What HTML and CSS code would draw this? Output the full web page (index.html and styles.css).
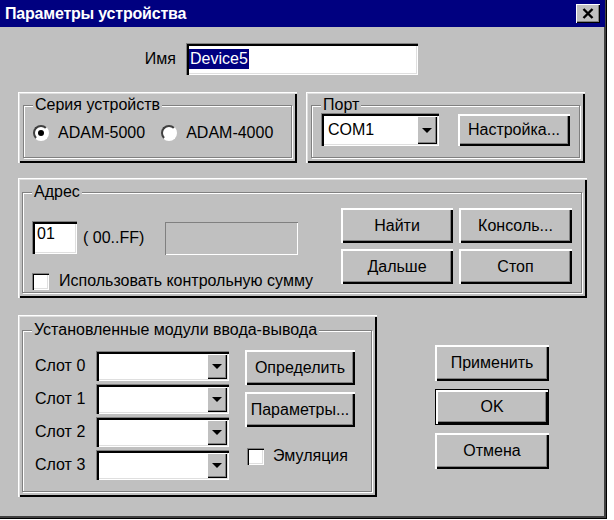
FILE: index.html
```html
<!DOCTYPE html>
<html lang="ru">
<head>
    <meta charset="UTF-8">
    <title>Параметры устройства</title>
    <link rel="stylesheet" href="styles.css">
</head>
<body>
<div class="window">
    <div class="titlebar">
        <span class="title">Параметры устройства</span>
        <span class="close-btn">
            <svg width="12" height="11" viewBox="0 0 12 11"><path d="M1.5 1 L10.5 10 M10.5 1 L1.5 10" stroke="#000" stroke-width="2.4"/></svg>
        </span>
    </div>

    <div class="content">
        <div class="name-row">
            <label class="name-label">Имя</label>
            <div class="field name-field"><span class="selected">Device5</span></div>
        </div>

        <div class="panel-row">
            <div class="panel series-panel">
                <fieldset class="group series-group">
                    <legend>Серия устройств</legend>
                    <div class="radios">
                        <span class="radio checked"></span><span class="radio-text">ADAM-5000</span>
                        <span class="radio"></span><span class="radio-text">ADAM-4000</span>
                    </div>
                </fieldset>
            </div>
            <div class="panel port-panel">
                <fieldset class="group port-group">
                    <legend>Порт</legend>
                    <div class="port-row">
                        <div class="field combo port-combo">
                            <span class="combo-value">COM1</span>
                            <span class="combo-btn"><span class="arrow"></span></span>
                        </div>
                        <button class="btn setup-btn">Настройка...</button>
                    </div>
                </fieldset>
            </div>
        </div>

        <div class="panel address-panel">
            <fieldset class="group address-group">
                <legend>Адрес</legend>
                <div class="address-left">
                    <div class="address-row">
                        <div class="field addr-field">01</div>
                        <span class="hint">( 00..FF)</span>
                        <div class="field disabled-field"></div>
                    </div>
                    <div class="check-row">
                        <span class="check"></span>
                        <span class="check-text">Использовать контрольную сумму</span>
                    </div>
                </div>
                <div class="address-buttons">
                    <button class="btn">Найти</button>
                    <button class="btn">Консоль...</button>
                    <button class="btn">Дальше</button>
                    <button class="btn">Стоп</button>
                </div>
            </fieldset>
        </div>

        <div class="bottom-row">
            <div class="panel modules-panel">
                <fieldset class="group modules-group">
                    <legend>Установленные модули ввода-вывода</legend>
                    <div class="slots">
                        <span class="slot-label">Слот 0</span>
                        <div class="field combo slot-combo"><span class="combo-value"></span><span class="combo-btn"><span class="arrow"></span></span></div>
                        <span class="slot-label">Слот 1</span>
                        <div class="field combo slot-combo"><span class="combo-value"></span><span class="combo-btn"><span class="arrow"></span></span></div>
                        <span class="slot-label">Слот 2</span>
                        <div class="field combo slot-combo"><span class="combo-value"></span><span class="combo-btn"><span class="arrow"></span></span></div>
                        <span class="slot-label">Слот 3</span>
                        <div class="field combo slot-combo"><span class="combo-value"></span><span class="combo-btn"><span class="arrow"></span></span></div>
                    </div>
                    <div class="module-actions">
                        <button class="btn">Определить</button>
                        <button class="btn">Параметры...</button>
                        <div class="check-row emul-row">
                            <span class="check"></span>
                            <span class="check-text">Эмуляция</span>
                        </div>
                    </div>
                </fieldset>
            </div>

            <div class="actions">
                <button class="btn">Применить</button>
                <button class="btn default-btn">OK</button>
                <button class="btn">Отмена</button>
            </div>
        </div>
    </div>
</div>
</body>
</html>
```

FILE: styles.css
```css
body {
    margin: 0;
    background: #fff;
    font-family: "Liberation Sans", Arial, sans-serif;
    font-size: 16px;
    color: #000;
}

.window {
    width: 607px;
    height: 519px;
    background: #c0c0c0;
    box-sizing: border-box;
    box-shadow: inset -1px -1px #000, inset -3px -3px #404040;
}

/* title bar */
.titlebar {
    height: 27px;
    margin-right: 2px;
    background: #000080;
    display: flex;
    align-items: center;
    justify-content: space-between;
    padding: 0 5px 0 5px;
}
.title {
    color: #fff;
    font-weight: bold;
    font-size: 16px;
    letter-spacing: -0.2px;
}
.close-btn {
    width: 24px;
    height: 19px;
    background: #c0c0c0;
    display: flex;
    align-items: center;
    justify-content: center;
    box-shadow: inset 1px 1px #fff, inset -1px -1px #000, inset -2px -2px #808080;
}

.content {
    padding-left: 18px;
}

/* common widgets */
.field {
    background: #fff;
    box-sizing: border-box;
    box-shadow: inset 1px 1px #808080, inset 3px 3px #000, inset -1px -1px #fff, inset -2px -2px #dfdfdf;
}
.btn {
    background: #c0c0c0;
    border: 0;
    padding: 0;
    font: inherit;
    color: #000;
    box-sizing: border-box;
    box-shadow: inset 2px 2px #fff, inset -2px -2px #000, inset -3px -3px #808080;
}
.default-btn {
    box-shadow: inset 0 0 0 1px #000, inset 3px 3px #fff, inset -3px -3px #000, inset -4px -4px #808080;
}
.panel {
    box-sizing: border-box;
    display: flex;
    flex-direction: column;
    box-shadow: inset 1px 1px #fff, inset 2px 2px #dfdfdf, inset -2px -2px #000;
}
.group {
    flex: 1;
    margin: 0;
    min-width: 0;
    border: 1px solid #808080;
    box-shadow: inset 1px 1px #fff, 1px 1px #fff;
    padding: 0 9px;
}
.group legend {
    background: #c0c0c0;
    padding: 0 2px;
    line-height: 16px;
}
.combo {
    display: flex;
    align-items: stretch;
    padding: 3px 2px 2px 3px;
}
.combo-value {
    flex: 1;
    display: flex;
    align-items: center;
    padding-left: 4px;
}
.combo-btn {
    width: 20px;
    background: #c0c0c0;
    display: flex;
    align-items: center;
    justify-content: center;
    box-shadow: inset 1px 1px #fff, inset -1px -1px #000, inset -2px -2px #808080;
}
.arrow {
    width: 0;
    height: 0;
    border-left: 5px solid transparent;
    border-right: 5px solid transparent;
    border-top: 5px solid #000;
}
.check {
    flex-shrink: 0;
    width: 17px;
    height: 17px;
    background: #fff;
    box-sizing: border-box;
    box-shadow: inset 1px 1px #808080, inset 2px 2px #000, inset -1px -1px #fff, inset -2px -2px #dfdfdf;
}
.check-row {
    display: flex;
    align-items: center;
    gap: 10px;
    white-space: nowrap;
}

/* name */
.name-row {
    display: flex;
    align-items: center;
    margin-top: 16px;
    padding-left: 112px;
}
.name-label {
    width: 46px;
    text-align: right;
    margin-right: 10px;
}
.name-field {
    width: 232px;
    height: 32px;
    display: flex;
    align-items: center;
    padding-left: 3px;
}
.selected {
    background: #000080;
    color: #fff;
    padding: 1px 1px;
}

/* series + port */
.panel-row {
    display: flex;
    gap: 9px;
    margin-top: 17px;
}
.series-panel, .port-panel {
    width: 279px;
    height: 71px;
    padding: 5px 5px 5px 5px;
}
.series-group {
    padding-top: 11px;
}
.radios {
    display: flex;
    align-items: center;
    height: 18px;
    white-space: nowrap;
}
.radio {
    flex-shrink: 0;
    width: 16px;
    height: 16px;
    box-sizing: border-box;
    border-radius: 50%;
    background: #fff;
    border: 2px solid;
    border-color: #404040 #fff #fff #404040;
    position: relative;
}
.radio.checked::after {
    content: "";
    position: absolute;
    left: 3px;
    top: 3px;
    width: 6px;
    height: 6px;
    border-radius: 50%;
    background: #000;
}
.radio-text {
    margin-left: 9px;
    margin-right: 16px;
}
.port-group {
    padding-top: 0;
}
.port-row {
    display: flex;
    align-items: center;
    gap: 19px;
}
.port-combo {
    width: 118px;
    height: 33px;
}
.setup-btn {
    width: 112px;
    height: 32px;
}

/* address */
.address-panel {
    width: 569px;
    height: 120px;
    margin-top: 15px;
    padding: 6px 5px 5px 4px;
}
.address-group {
    display: flex;
    justify-content: space-between;
    padding-top: 8px;
}
.address-left {
    width: 266px;
    margin-top: 12px;
}
.address-row {
    display: flex;
    align-items: center;
}
.addr-field {
    width: 45px;
    height: 33px;
    padding: 4px 0 0 5px;
}
.hint {
    margin-left: 6px;
}
.disabled-field {
    width: 133px;
    height: 33px;
    margin-left: auto;
    margin-top: 2px;
    background: #c0c0c0;
    box-shadow: inset 1px 1px #808080, inset -1px -1px #fff;
}
.address-left .check-row {
    margin-top: 17px;
}
.address-buttons {
    display: grid;
    grid-template-columns: 112px 113px;
    grid-auto-rows: 35px;
    gap: 6px;
    align-self: flex-start;
}

/* modules */
.bottom-row {
    display: flex;
    align-items: flex-start;
    margin-top: 17px;
}
.modules-panel {
    width: 359px;
    height: 182px;
    padding: 7px 5px 5px 4px;
}
.modules-group {
    display: flex;
    align-items: flex-start;
    padding-top: 13px;
}
.slots {
    display: grid;
    grid-template-columns: 64px 133px;
    grid-auto-rows: 30px;
    row-gap: 3px;
    align-items: center;
}
.slot-label {
    padding-left: 3px;
}
.slot-combo {
    height: 30px;
}
.module-actions {
    margin-left: 16px;
    margin-top: -1px;
    display: flex;
    flex-direction: column;
    gap: 7px;
}
.module-actions .btn {
    width: 110px;
    height: 35px;
}
.emul-row {
    margin-top: 13px;
    padding-left: 2px;
    gap: 9px;
}

/* dialog buttons */
.actions {
    margin-left: 58px;
    margin-top: 30px;
    display: flex;
    flex-direction: column;
    gap: 8px;
}
.actions .btn {
    width: 114px;
    height: 36px;
}
```
